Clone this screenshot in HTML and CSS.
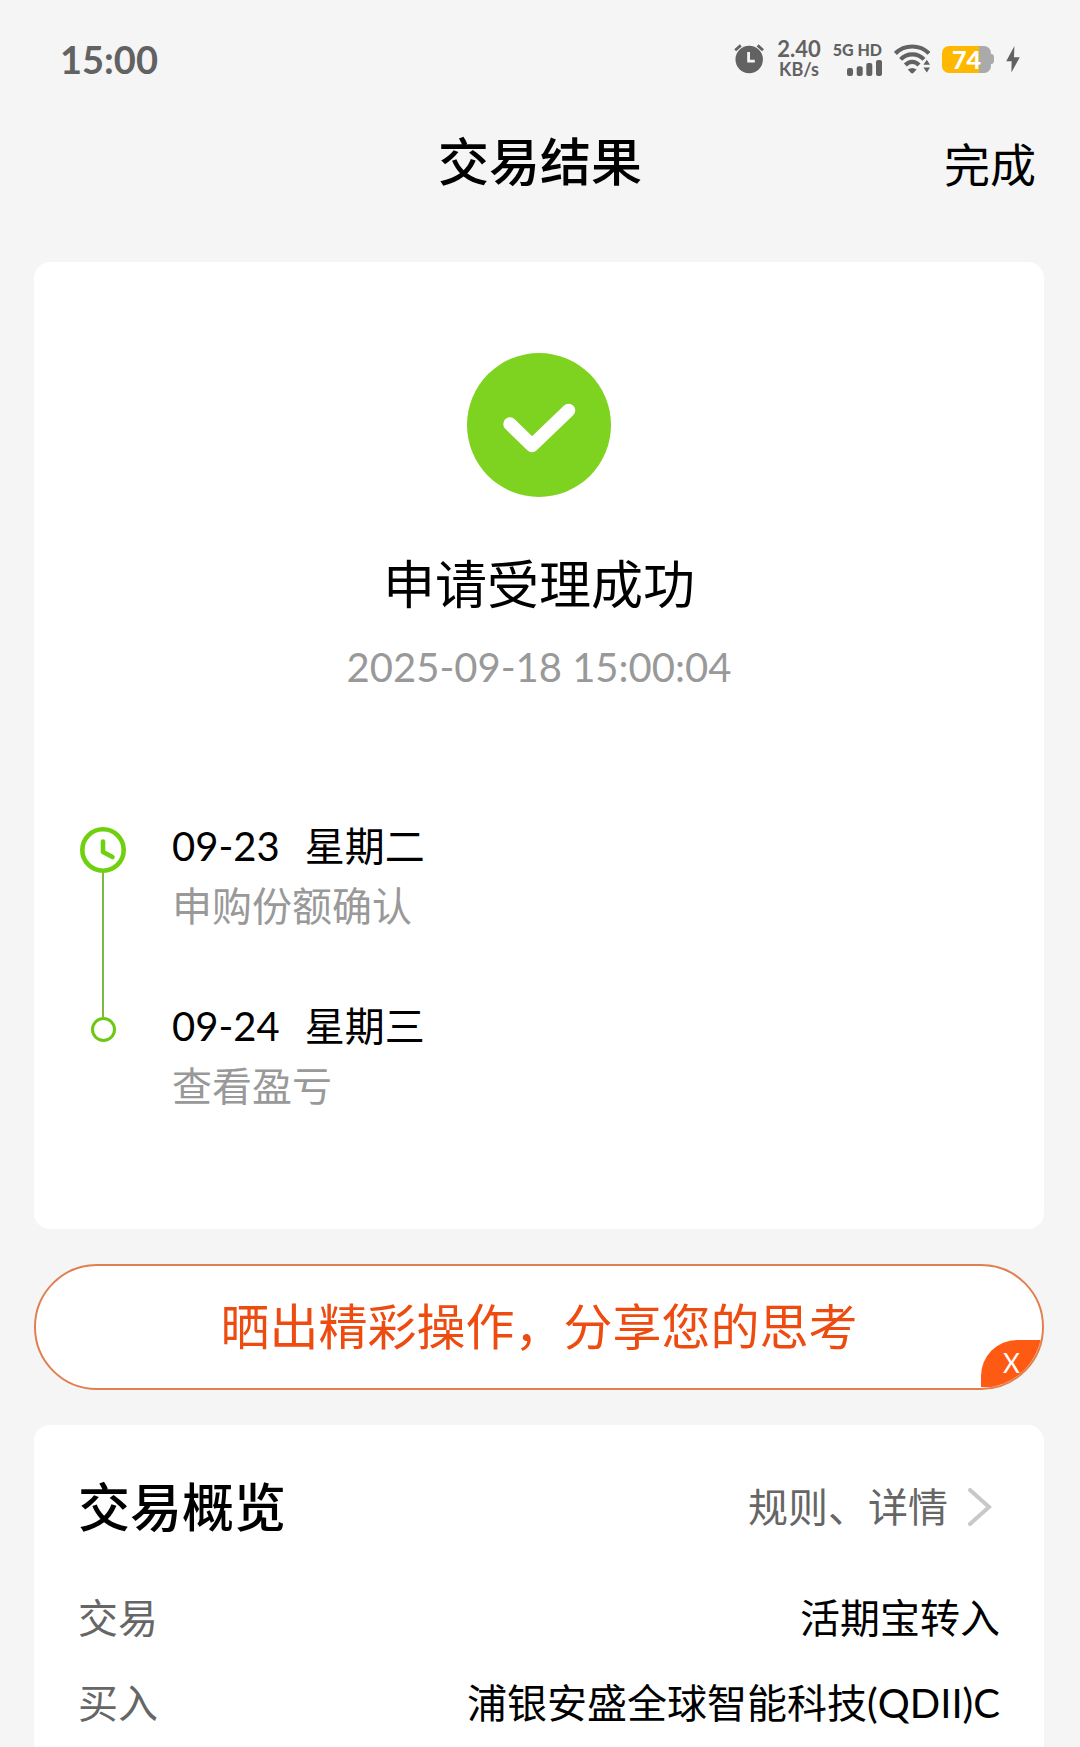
FILE: index.html
```html
<!DOCTYPE html>
<html lang="zh-CN">
<head>
<meta charset="utf-8" />
<meta name="viewport" content="width=device-width, initial-scale=1" />
<title>交易结果</title>
<link rel="stylesheet" href="styles.css">
</head>
<body>
	<div class="status">
		<span class="time">15:00</span>
		<div class="status_r">
			<svg width="30" height="30" viewBox="0 0 30 30">
				<circle cx="15.2" cy="15.5" r="13.7" fill="#626262"/>
				<path d="M1.2 6.2L6.8 1.4M23.6 1.4L29 6.2" stroke="#626262" stroke-width="2.8" fill="none"/>
				<path d="M14.6 8V17.2H20.8" stroke="#f5f5f5" stroke-width="2.8" fill="none"/>
			</svg>
			<div class="speed"><span>2.40</span><span class="unit">KB/s</span></div>
			<div class="signal">
				<span>5G HD</span>
				<svg width="35" height="16" viewBox="0 0 35 16" fill="#626262">
					<rect x="0" y="8" width="6" height="8" rx="2"/>
					<rect x="9.7" y="6.3" width="6" height="9.7" rx="2"/>
					<rect x="19.3" y="3" width="6" height="13" rx="2"/>
					<rect x="29" y="0" width="6" height="16" rx="2"/>
				</svg>
			</div>
			<svg width="36" height="30" viewBox="0 0 36 30">
				<g fill="none" stroke="#626262" stroke-width="4.2">
					<path d="M1.4 9.4C10.5 .2 26 .2 35 9.4"/>
					<path d="M6.6 15.4C13 8.8 23.6 8.8 30 15.4"/>
					<path d="M11.4 21C15.4 16.8 21 16.8 25 21"/>
				</g>
				<path d="M13.8 25.6Q18.2 22.6 22.6 25.6L19.3 29.1Q18.2 30 17.1 29.1Z" fill="#626262"/>
				<path d="M29.4 20.8L32.8 15.8L36 20.8ZM29.4 23.6H36L32.8 28.6Z" fill="#626262"/>
			</svg>
			<div class="battery"><div class="battery_box"><span>74</span></div></div>
			<svg width="14" height="27" viewBox="0 0 14 27"><path d="M8.4 0L.2 15.2H5.6L5.4 26.4L13.8 11.2H8Z" fill="#626262"/></svg>
		</div>
	</div>

	<div class="header">
		<h1>交易结果</h1>
		<button type="button" class="done">完成</button>
	</div>

	<div class="main">
		<div class="card result">
			<svg class="ok" width="144" height="144" viewBox="0 0 144 144">
				<circle cx="72" cy="72" r="72" fill="#7ed321"/>
				<path d="M43 71L65 92.5L101.5 57.5" fill="none" stroke="#fff" stroke-width="13.5" stroke-linecap="round" stroke-linejoin="round"/>
			</svg>
			<h2>申请受理成功</h2>
			<p class="date">2025-09-18 15:00:04</p>
			<div class="timeline">
				<div class="rail">
					<svg width="46" height="46" viewBox="0 0 46 46" fill="none" stroke="#6fd010">
						<circle cx="23" cy="23" r="20.7" stroke-width="4.6"/>
						<path d="M23 14.5V25L32.5 30" stroke-width="4.6" stroke-linecap="round" stroke-linejoin="round"/>
					</svg>
					<i class="line"></i>
					<i class="dot"></i>
				</div>
				<ul>
					<li>
						<p>09-23<span class="week">星期二</span></p>
						<p class="gray">申购份额确认</p>
					</li>
					<li>
						<p>09-24<span class="week">星期三</span></p>
						<p class="gray">查看盈亏</p>
					</li>
				</ul>
			</div>
		</div>

		<div class="share">
			<a href="#">晒出精彩操作，分享您的思考</a>
			<button type="button" class="close">X</button>
		</div>

		<div class="card overview">
			<div class="overview_t">
				<h2>交易概览</h2>
				<a href="#">规则、详情
					<svg width="24" height="38" viewBox="0 0 24 38"><path d="M2 2L21 19L2 36" fill="none" stroke="#c8c8c8" stroke-width="4" stroke-linecap="round"/></svg>
				</a>
			</div>
			<dl>
				<div><dt>交易</dt><dd>活期宝转入</dd></div>
				<div><dt>买入</dt><dd>浦银安盛全球智能科技(QDII)C</dd></div>
			</dl>
		</div>
	</div>
</body>
</html>
```
FILE: styles.css
```css
*{padding:0; margin:0; box-sizing:border-box;}
li{list-style:none;}
a{text-decoration:none;}
svg{display:block; flex:none;}
button{border:0; background:none; font-family:inherit; cursor:pointer;}
body{display:flex; flex-direction:column; min-height:100vh; background:#f5f5f5; color:#000; font-family:Lato,"Noto Sans CJK SC",sans-serif; font-size:40px; line-height:60px;}

/* status bar */
.status{display:flex; justify-content:space-between; align-items:center; height:118px; padding:0 60px; color:#626262; font-weight:bold;}
.time{font-size:38px;}
.status_r{display:flex; align-items:center; gap:12px;}
.speed{width:46px; font-size:22px; line-height:21px; text-align:center;}
.speed span{display:block;}
.speed .unit{font-size:18px;}
.signal{display:flex; flex-direction:column; align-items:flex-end; gap:2px; width:48px; font-size:16px; font-weight:900; line-height:16px; white-space:nowrap;}
.battery{display:flex; align-items:center; width:52px;}
.battery:after{content:""; width:3px; height:10px; background:#aaa; border-radius:0 3px 3px 0;}
.battery_box{flex:1; height:27px; border-radius:7px; background:linear-gradient(to right,#ffb800 75%,#aaa 75%); color:#fff; font-size:25px; font-weight:900; line-height:27px; text-align:center;}

.header{display:grid; grid-template-columns:1fr auto 1fr; align-items:center; height:88px; padding:0 44px; margin-bottom:56px;}
.header h1{grid-column:2; font-size:51px; font-weight:500;}
.done{justify-self:end; font-size:46px; color:#000;}

.main{flex:1; display:flex; flex-direction:column; gap:35px; padding:0 36px 0 34px;}
.card{background:#fff; border-radius:16px;}

.result{padding:91px 46px 113px;}
.ok{margin:0 auto 51px;}
.result h2{font-size:52px; font-weight:normal; line-height:72px; text-align:center;}
.date{margin-top:17px; color:#999; text-align:center;}
.timeline{display:flex; gap:46px; margin-top:119px;}
.rail{display:flex; flex-direction:column; align-items:center; padding:11px 0 74px;}
.line{flex:1; width:2px; background:#7cb948;}
.dot{width:25px; height:25px; border:3px solid #6cc814; border-radius:50%;}
.timeline li+li{margin-top:60px;}
.week{margin-left:25px;}
.gray{color:#999;}

.share{position:relative; display:flex; height:126px; border:2px solid #e08050; border-radius:63px; background:#fff; overflow:hidden;}
.share a{flex:1; color:#ee4b10; font-size:49px; line-height:120px; text-align:center;}
.close{position:absolute; right:0; bottom:1px; width:61px; height:47px; border-radius:36px 0 0 0; background:#ff5a14; color:#fff; font-size:26px; line-height:47px;}

.overview{flex:1; padding:42px 44px 0; border-radius:16px 16px 0 0;}
.overview_t{display:flex; justify-content:space-between; align-items:center; height:80px; margin-bottom:29px;}
.overview_t h2{font-size:52px; font-weight:500;}
.overview_t a{display:flex; align-items:center; gap:20px; padding-right:8px; color:#666;}
.overview dl div{display:flex; justify-content:space-between; line-height:85px;}
.overview dt{color:#666;}
```
